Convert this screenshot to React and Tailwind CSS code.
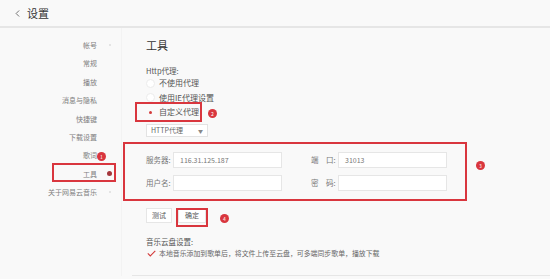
import { ChevronLeft } from 'lucide-react';

const navItems = ['帐号', '常规', '播放', '消息与隐私', '快捷键', '下载设置', '歌词', '工具', '关于网易云音乐'];

function Badge({ n, className }) {
  return (
    <span className={`absolute flex h-[9px] w-[9px] items-center justify-center rounded-full bg-[#d9363e] text-[5px] leading-none text-white ${className}`}>
      {n}
    </span>
  );
}

function Radio({ label, checked }) {
  return (
    <div className="flex h-[14.5px] items-center">
      <span className="flex h-[9px] w-[9px] items-center justify-center rounded-full">
        {checked ? (
          <span className="h-[3px] w-[3px] rounded-full bg-[#d33a3a]" />
        ) : (
          <span className="h-[9px] w-[9px] rounded-full border border-[#ececec] bg-white" />
        )}
      </span>
      <span className="ml-[4px] text-[8px] text-[#555]">{label}</span>
    </div>
  );
}

function Field({ label, value }) {
  return (
    <div className="flex items-center">
      <span className="w-[27px] text-[7.5px] text-[#777]">{label}</span>
      <div className="flex h-[16px] w-[109px] items-center border border-[#e6e6e6] bg-white pl-[6px] text-[7px] text-[#777]">
        {value}
      </div>
    </div>
  );
}

export default function App() {
  return (
    <div
      className="relative h-[279px] w-[550px] overflow-hidden bg-[#f9f9f9] text-[#666]"
      style={{ fontFamily: '"Noto Sans CJK SC", "Noto Sans", sans-serif' }}
    >
      {/* Header */}
      <div className="flex h-[28px] items-center border-b-2 border-[#e6e6e6] pl-[12px]">
        <ChevronLeft className="h-[11px] w-[11px] text-[#444]" strokeWidth={1.6} />
        <span className="ml-[4px] text-[11px] text-[#333]">设置</span>
      </div>

      <div className="flex">
        {/* Sidebar */}
        <div className="w-[122px] border-r border-[#f3f3f3] pr-[10px] pt-[8px]">
          {navItems.map((item) => (
            <div key={item} className="flex h-[18.4px] items-center justify-end gap-[11px]">
              <span className="text-[7px] text-[#808080]">{item}</span>
              <span className="flex w-[3px] items-center justify-center">
                {item === '工具' ? (
                  <span className="h-[5px] w-[5px] shrink-0 rounded-full bg-[#a5373c]" />
                ) : item === '帐号' || item === '关于网易云音乐' ? (
                  <span className="h-[2px] w-[2px] rounded-full bg-[#ddd]" />
                ) : null}
              </span>
            </div>
          ))}
        </div>

        {/* Content */}
        <div className="flex-1 pl-[24px] pt-[9px]">
          <div className="h-[16px] text-[11px] leading-[16px] text-[#333]">工具</div>
          <div className="mt-[13px] h-[10px] text-[7.5px] leading-[10px] text-[#555]">Http代理:</div>
          <Radio label="不使用代理" />
          <Radio label="使用IE代理设置" />
          <Radio label="自定义代理" checked />
          <div className="mt-[4.5px] flex h-[13px] w-[62px] items-center justify-between border border-[#e3e3e3] bg-white pl-[4px] pr-[4px] text-[7px] text-[#666]">
            <span>HTTP代理</span>
            <span className="text-[5px] text-[#888]">▼</span>
          </div>

          <div className="mt-[15px] flex gap-[29px]">
            <Field label="服务器:" value="116.31.125.187" />
            <Field label="端　口:" value="31013" />
          </div>
          <div className="mt-[7px] flex gap-[29px]">
            <Field label="用户名:" value="" />
            <Field label="密　码:" value="" />
          </div>

          <div className="mt-[17px] flex h-[15px] gap-[6px]">
            <div className="flex w-[26px] items-center justify-center border border-[#e6e6e6] bg-white text-[7px] text-[#555]">测试</div>
            <div className="flex w-[28px] items-center justify-center border border-[#e6e6e6] bg-white text-[7px] text-[#555]">确定</div>
          </div>

          <div className="mt-[14px] h-[10px] text-[7.5px] leading-[10px] text-[#555]">音乐云盘设置:</div>
          <div className="mt-[1px] flex h-[10px] items-center">
            <svg width="9" height="7" viewBox="0 0 9 7" className="ml-[1px]">
              <polyline points="0.8,3.4 3.3,5.9 8.3,0.8" fill="none" stroke="#d33a3a" strokeWidth="1.1" />
            </svg>
            <span className="ml-[3px] text-[6.9px] leading-[10px] text-[#666]">
              本地音乐添加到歌单后，将文件上传至云盘，可多端同步歌单，播放下载
            </span>
          </div>
          <div className="ml-[-14px] mt-[17px] border-t border-[#e6e6e6]" />
        </div>
      </div>

      {/* Annotations */}
      <div className="absolute left-[52px] top-[163px] h-[19px] w-[64px] border-2 border-[#d9363e]" />
      <Badge n="1" className="left-[97px] top-[152px]" />
      <div className="absolute left-[135px] top-[102px] h-[20px] w-[67px] border-2 border-[#d9363e]" />
      <Badge n="2" className="left-[208px] top-[109px]" />
      <div className="absolute left-[123px] top-[142px] h-[59px] w-[344px] border-[2.5px] border-[#d9363e]" />
      <Badge n="3" className="left-[476px] top-[161px]" />
      <div className="absolute left-[176px] top-[208px] h-[19px] w-[32px] border-2 border-[#d9363e]" />
      <Badge n="4" className="left-[220px] top-[214px]" />
    </div>
  );
}
